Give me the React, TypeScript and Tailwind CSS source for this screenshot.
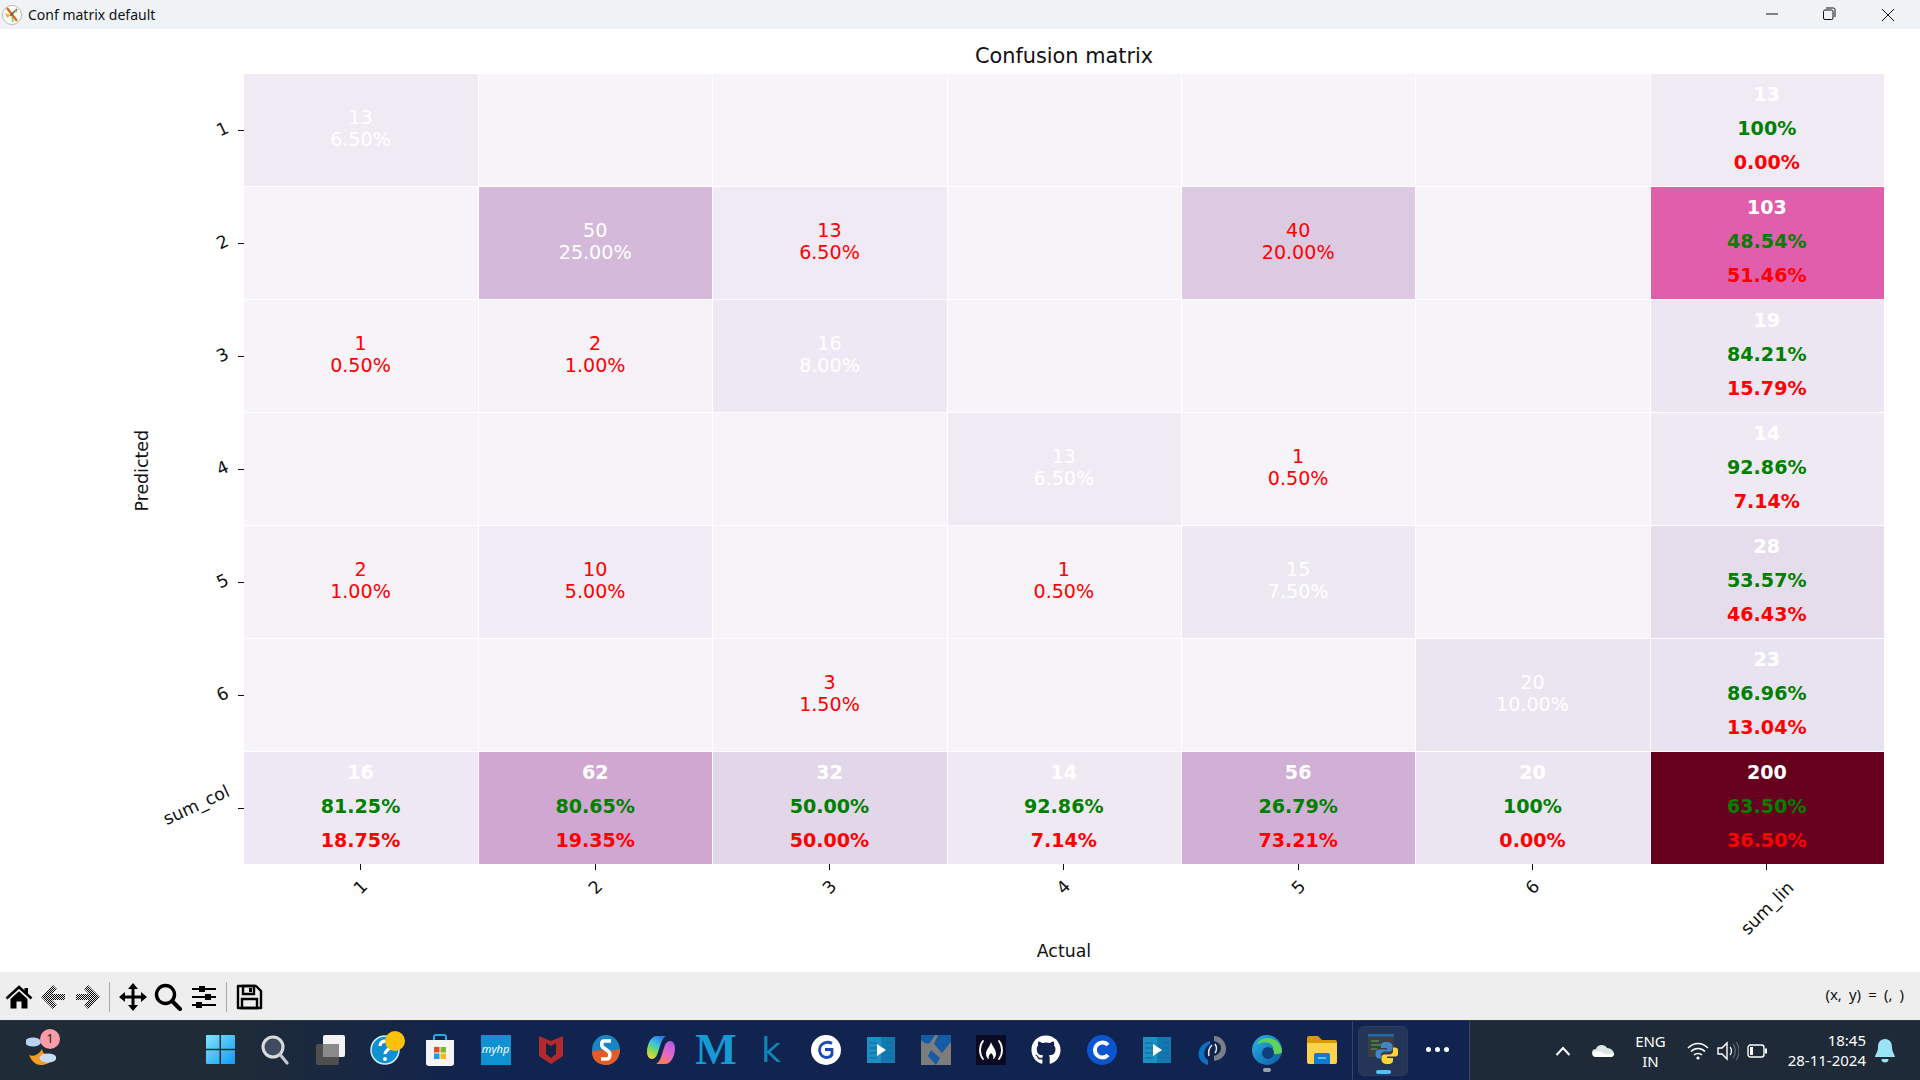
import { FaGithub } from "react-icons/fa";

const dejavu = "font-['DejaVu_Sans',sans-serif]";
const noto = "font-['Noto_Sans',sans-serif]";

// PuRd colormap, value out of 200
const cellBg: Record<number, string> = {
  0: "bg-[#f6f3f9]",
  1: "bg-[#f6f3f9]",
  2: "bg-[#f6f2f8]",
  3: "bg-[#f5f2f8]",
  10: "bg-[#f1ecf5]",
  13: "bg-[#efeaf4]",
  14: "bg-[#eee9f3]",
  15: "bg-[#ede9f3]",
  16: "bg-[#ede8f3]",
  19: "bg-[#ebe6f1]",
  20: "bg-[#eae5f1]",
  23: "bg-[#e8e3f0]",
  28: "bg-[#e5dcec]",
  32: "bg-[#e2d6e9]",
  40: "bg-[#dcc9e2]",
  50: "bg-[#d4b9da]",
  56: "bg-[#d1b0d5]",
  62: "bg-[#cfa7d1]",
  103: "bg-[#e05eab]",
  200: "bg-[#67001f]",
};

const matrix = [
  [13, 0, 0, 0, 0, 0],
  [0, 50, 13, 0, 40, 0],
  [1, 2, 16, 0, 0, 0],
  [0, 0, 0, 13, 1, 0],
  [2, 10, 0, 1, 15, 0],
  [0, 0, 3, 0, 0, 20],
];

const sumLin: [number, string, string][] = [
  [13, "100%", "0.00%"],
  [103, "48.54%", "51.46%"],
  [19, "84.21%", "15.79%"],
  [14, "92.86%", "7.14%"],
  [28, "53.57%", "46.43%"],
  [23, "86.96%", "13.04%"],
];

const sumCol: [number, string, string][] = [
  [16, "81.25%", "18.75%"],
  [62, "80.65%", "19.35%"],
  [32, "50.00%", "50.00%"],
  [14, "92.86%", "7.14%"],
  [56, "26.79%", "73.21%"],
  [20, "100%", "0.00%"],
  [200, "63.50%", "36.50%"],
];

const labels = ["1", "2", "3", "4", "5", "6"];

function Cell({ value, diagonal }: { value: number; diagonal: boolean }) {
  return (
    <div
      className={`flex flex-col items-center justify-center pb-[3px] pr-[1px] text-[19.1px] leading-[22px] ${cellBg[value]} ${diagonal ? "text-white" : "text-[#ff0000]"}`}
    >
      {value > 0 && <span>{value}</span>}
      {value > 0 && <span>{(value / 2).toFixed(2)}%</span>}
    </div>
  );
}

function SumCell({ row }: { row: [number, string, string] }) {
  return (
    <div
      className={`flex flex-col items-center justify-center pb-[3px] pr-[1px] text-[19.1px] font-bold leading-[34px] ${cellBg[row[0]]}`}
    >
      <span className="text-white">{row[0]}</span>
      <span className="text-[#008000]">{row[1]}</span>
      <span className="text-[#ff0000]">{row[2]}</span>
    </div>
  );
}

function AppIcon() {
  return (
    <svg width="20" height="20" viewBox="0 0 20 20" className="ml-[2px] mr-[6px]">
      <circle cx="10" cy="10" r="9.5" fill="#fff" stroke="#9a9a9a" strokeWidth="0.7" />
      <path d="M5 3l10 13" stroke="#e0661a" strokeWidth="2.4" />
      <path d="M15 4L8 11" stroke="#555" strokeWidth="1.4" />
      <path d="M3 8l6 2-4 3z" fill="#f5b52e" />
      <path d="M10 12l1 5" stroke="#7ccf5a" strokeWidth="1.6" />
      <circle cx="14" cy="6" r="1.3" fill="#8fbf3f" />
    </svg>
  );
}

function ToolIcon({ children }: { children: React.ReactNode }) {
  return (
    <svg width="28" height="28" viewBox="0 0 28 28" className="shrink-0">
      {children}
    </svg>
  );
}

function Toolbar() {
  return (
    <div className="flex h-[48px] items-center bg-[#eeeeee] pl-[4px] pr-[16px]">
      <div className="flex items-center gap-[7px] pt-[1px]">
        <div className="ml-[1px] mr-[-1px]">
          <ToolIcon>
            <path d="M1.500 15.500L14 4l12.500 11.500" fill="none" stroke="#000" strokeWidth="2.600" />
            <path d="M19.500 5h3.500v6.500l-3.500-3z" fill="#000" />
            <path d="M5.500 16L14 8.300 22.500 16v9.500H16.500V18.500h-5v7H5.500z" fill="#000" />
          </ToolIcon>
        </div>
        <ToolIcon>
          <defs>
            <pattern id="dither" width="2" height="2" patternUnits="userSpaceOnUse">
              <rect width="1" height="1" fill="#000" />
              <rect x="1" y="1" width="1" height="1" fill="#000" />
            </pattern>
          </defs>
          <path d="M2 14L14 2l4 4-5 5h13v6H13l5 5-4 4z" fill="url(#dither)" />
        </ToolIcon>
        <ToolIcon>
          <path d="M26 14L14 2l-4 4 5 5H2v6h13l-5 5 4 4z" fill="url(#dither)" />
        </ToolIcon>
        <div className="h-[30px] w-px bg-[#a8a8a8]" />
        <div className="ml-[2px]">
          <ToolIcon>
            <path
              d="M14 0l5 6h-3.500v6.500H22V9l6 5-6 5v-3.500h-6.500V22H19l-5 6-5-6h3.500v-6.500H6V19l-6-5 6-5v3.500h6.500V6H9z"
              fill="#000"
            />
          </ToolIcon>
        </div>
        <ToolIcon>
          <circle cx="11.500" cy="11.500" r="9" fill="none" stroke="#000" strokeWidth="3.400" />
          <path d="M18 18l8 8" stroke="#000" strokeWidth="4" strokeLinecap="round" />
        </ToolIcon>
        <div className="ml-[1px]">
          <ToolIcon>
            <path d="M2 6h24M2 14h24M2 22h24" stroke="#000" strokeWidth="2" />
            <path d="M9 3h6v6H9zM15 11h6v6h-6zM6 19h6v6H6z" fill="#000" />
          </ToolIcon>
        </div>
        <div className="ml-[1px] h-[30px] w-px bg-[#a8a8a8]" />
        <div className="ml-[1px]">
          <ToolIcon>
            <path
              d="M3 3h18l5 5v17H3z"
              fill="none"
              stroke="#000"
              strokeWidth="2.400"
              strokeLinejoin="round"
            />
            <path d="M8 3h11v8H8z" fill="none" stroke="#000" strokeWidth="2.400" />
            <path d="M7 16h15v9H7z" fill="none" stroke="#000" strokeWidth="2.400" />
            <path d="M14 5h3v4h-3z" fill="#000" />
          </ToolIcon>
        </div>
      </div>
      <span className={`ml-auto pb-[4px] text-[15px] text-[#111] [word-spacing:3.2px] ${noto}`}>
        (x, y) = (, )
      </span>
    </div>
  );
}

function PlayerIcon() {
  return (
    <svg width="28" height="26" viewBox="0 0 28 26">
      <rect width="28" height="26" fill="#1c8fc4" />
      <rect x="14" width="14" height="26" fill="#1478b0" />
      <path d="M2 6h8M2 11h8M2 16h8M2 21h8M19 6h7M19 11h7M19 16h7M19 21h7" stroke="#0f6a9e" strokeWidth="1.200" />
      <path d="M10 7l9 6-9 6z" fill="#fff" />
    </svg>
  );
}

function Start() {
  return (
    <svg width="29" height="29" viewBox="0 0 29 29">
      <defs>
        <linearGradient id="startG" x1="0" y1="0" x2="1" y2="1">
          <stop offset="0" stopColor="#7fe4fb" />
          <stop offset="1" stopColor="#119cf5" />
        </linearGradient>
      </defs>
      <path d="M0 1a1 1 0 011-1h12.500v13.800H0zM15 0h13a1 1 0 011 1v12.800H15zM0 15.200h13.500V29H1a1 1 0 01-1-1zM15 15.200h14V28a1 1 0 01-1 1H15z" fill="url(#startG)" />
    </svg>
  );
}

// one 55px slot for each pinned taskbar icon
const pinned: React.ReactNode[] = [
  <Start key="start" />,
  <svg key="search" width="30" height="30" viewBox="0 0 30 30">
    <circle cx="13" cy="12" r="10" fill="#3e4c5e" stroke="#d8dcdf" strokeWidth="3" />
    <path d="M20.500 20l6.500 8" stroke="#c4c8cc" strokeWidth="3.200" strokeLinecap="round" />
  </svg>,
  <svg key="tasks" width="30" height="30" viewBox="0 0 30 30">
    <rect x="1" y="9" width="23" height="21" rx="2" fill="#4f4f4f" />
    <rect x="8" y="0" width="22" height="22" rx="2" fill="#f3f3f3" />
    <rect x="8" y="9" width="16" height="13" fill="#8a8a8a" />
  </svg>,
  <div key="help" className="relative h-[30px] w-[30px]">
    <svg width="30" height="30" viewBox="0 0 30 30">
      <circle cx="15" cy="15" r="14" fill="#1190cf" stroke="#cfeefa" strokeWidth="1.500" />
      <path d="M10 11c0-7 11-6 10 0 0 4-5 4-5 8" fill="none" stroke="#fff" strokeWidth="3.200" />
      <circle cx="15" cy="24" r="2" fill="#fff" />
    </svg>
    <div className="absolute right-[-5px] top-[-4px] h-[20px] w-[20px] rounded-full bg-[#fdc208]" />
  </div>,
  <svg key="store" width="30" height="32" viewBox="0 0 30 32">
    <path d="M9 7V3a2 2 0 012-2h8a2 2 0 012 2v4" fill="none" stroke="#29a8e8" strokeWidth="2" />
    <path d="M1 6h28v23a3 3 0 01-3 3H4a3 3 0 01-3-3z" fill="#f5f5f5" />
    <rect x="9" y="13" width="5.500" height="5.500" fill="#e8492a" />
    <rect x="15.500" y="13" width="5.500" height="5.500" fill="#7cb72a" />
    <rect x="9" y="19.500" width="5.500" height="5.500" fill="#14a1e8" />
    <rect x="15.500" y="19.500" width="5.500" height="5.500" fill="#fdb813" />
  </svg>,
  <div key="myhp" className="flex h-[30px] w-[30px] items-center justify-center bg-[#0f92d2] text-[11px] italic text-white">
    <span className={noto}>myhp</span>
  </div>,
  <svg key="mcafee" width="26" height="30" viewBox="0 0 26 30">
    <path d="M1 1l12 5 12-5v20L13 29 1 21z" fill="#b32a2a" />
    <path d="M8 8l5 3 5-3v11l-5 4-5-4z" fill="#142247" />
  </svg>,
  <svg key="sync" width="28" height="30" viewBox="0 0 28 30">
    <ellipse cx="14" cy="15" rx="14" ry="15" fill="#1986c4" />
    <path d="M0 17c8-4 18 1 28-3 0 9-6 16-14 16S0 25 0 17z" fill="#e85a22" />
    <path d="M19 6h-7c-3 0-3 6 0 7l4 3c3 2 2 8-1 8H9" fill="none" stroke="#fff" strokeWidth="3.600" />
  </svg>,
  <svg key="copilot" width="30" height="30" viewBox="0 0 30 30">
    <defs>
      <linearGradient id="cpA" x1="0.7" y1="0" x2="0.2" y2="1">
        <stop offset="0" stopColor="#2a7af0" />
        <stop offset="0.4" stopColor="#3fc7d8" />
        <stop offset="0.7" stopColor="#8fd84a" />
        <stop offset="1" stopColor="#f7d23a" />
      </linearGradient>
      <linearGradient id="cpB" x1="0.7" y1="0" x2="0.2" y2="1">
        <stop offset="0" stopColor="#b45ce8" />
        <stop offset="0.5" stopColor="#e868c8" />
        <stop offset="1" stopColor="#f7823c" />
      </linearGradient>
    </defs>
    <path d="M11 1h9c-2 1-4 4-5 7l-3 9c-1 4-3 7-6 7-3 0-5-3-5-7C1 9 5 1 11 1z" fill="url(#cpA)" />
    <path d="M19 29h-9c2-1 4-4 5-7l3-9c1-4 3-7 6-7 3 0 5 3 5 7 0 8-4 16-10 16z" fill="url(#cpB)" />
  </svg>,
  <span key="m" className="font-['Liberation_Serif',serif] text-[44px] font-bold leading-none text-[#159ad6]">
    M
  </span>,
  <span key="k" className={`${dejavu} text-[34px] leading-none text-[#0e86b8]`}>
    k
  </span>,
  <svg key="g" width="30" height="30" viewBox="0 0 30 30">
    <circle cx="15" cy="15" r="15" fill="#fff" />
    <path d="M21 8.500A8.500 8.500 0 0 0 9 12c-1.500 5 1 10 6 10.500 2.500 0 5-1 6-3v-5h-7" fill="none" stroke="#1b49b8" strokeWidth="2.800" />
  </svg>,
  <PlayerIcon key="player" />,
  <svg key="tri" width="30" height="30" viewBox="0 0 30 30">
    <rect width="30" height="30" fill="#7d7d7d" />
    <path d="M3 0h11L9 8C7 10 3 8 0 5V0zM17 0h13v7L21 18l-8-9zM10 15l9 8-4 7-8-9z" fill="#155ba6" />
  </svg>,
  <div key="fcc" className={`flex h-[30px] w-[30px] items-center justify-center bg-[#0a0a23] text-[17px] text-white ${noto}`}>
    <svg width="26" height="22" viewBox="0 0 26 22">
      <path d="M5 2C1 7 1 15 5 20M21 2c4 5 4 13 0 18" fill="none" stroke="#fff" strokeWidth="1.800" strokeLinecap="round" />
      <path d="M13 3c1 4 5 7 5 12 0 3-2 5-3 5 1-2 0-4-2-6-2 2-3 4-2 6-1 0-3-2-3-5 0-5 4-7 5-12z" fill="#fff" />
    </svg>
  </div>,
  <FaGithub key="github" size={30} color="#fff" />,
  <svg key="c" width="30" height="30" viewBox="0 0 30 30">
    <circle cx="15" cy="15" r="15" fill="#0a56d0" />
    <path d="M21 10a7.500 7.500 0 1 0 0 10" fill="none" stroke="#fff" strokeWidth="4" />
  </svg>,
  <PlayerIcon key="player2" />,
  <svg key="arc" width="30" height="30" viewBox="0 0 30 30">
    <path d="M13 6C4 8 0 16 2 22c1 4 5 7 9 8v-5c-3-2-5-5-3-10 1-3 3-5 5-6z" fill="#0f6fc0" />
    <path d="M17 1c7 0 12 6 12 13 0 5-3 9-8 11l-4 1v-5c4-1 7-4 7-8s-3-6-7-7z" fill="#7a7f87" />
    <path d="M15 10c-3 3-4 7-3 11M18 9c2 3 2 6 0 9" fill="none" stroke="#eef" strokeWidth="1.500" />
  </svg>,
  <div key="edge" className="relative h-[30px] w-[30px]">
    <svg width="30" height="30" viewBox="0 0 30 30">
      <defs>
        <linearGradient id="edgeG" x1="0" y1="0" x2="1" y2="1">
          <stop offset="0" stopColor="#27b6e5" />
          <stop offset="1" stopColor="#0c59a4" />
        </linearGradient>
      </defs>
      <circle cx="15" cy="15" r="15" fill="url(#edgeG)" />
      <path d="M30 17c0-9-7-14-14-14C10 3 6 6 5 10c5-4 13-4 16 2 1 3-1 5-3 6 5 2 12 1 12-1z" fill="#5fd35a" />
      <circle cx="16" cy="18" r="6" fill="#0d3f7c" />
    </svg>
    <div className="absolute bottom-[-7px] left-[11px] h-[4px] w-[8px] rounded-full bg-[#9aa3b0]" />
  </div>,
  <svg key="folder" width="30" height="28" viewBox="0 0 30 28">
    <path d="M0 2a2 2 0 012-2h9l4 4h13a2 2 0 012 2v3H0z" fill="#d99a0a" />
    <path d="M0 7h30v19a2 2 0 01-2 2H2a2 2 0 01-2-2z" fill="#fcd24d" />
    <path d="M7 19a2 2 0 012-2h12a2 2 0 012 2v9H7z" fill="#0f7bd0" />
    <path d="M11 22h8" stroke="#7fd0f7" strokeWidth="1.500" />
  </svg>,
];

function Taskbar() {
  return (
    <div className="flex h-[60px] items-center border-t border-[#2b3446] bg-[linear-gradient(90deg,#1f2b36_0%,#1f2b36_12%,#11234f_25%,#11234f_100%)] text-white">
      <div className="relative ml-[26px] flex h-[30px] w-[30px] shrink-0 items-center justify-center">
        <svg width="30" height="30" viewBox="0 0 30 30">
          <path d="M3 19c4 2 10 0 13-6 1 6 5 6 12 8-3 6-8 8-13 8-6 0-10-5-12-10z" fill="#f59a23" />
          <ellipse cx="7" cy="6" rx="8" ry="4.500" fill="#b9d2f2" />
          <ellipse cx="22" cy="22" rx="8.500" ry="4.500" fill="#c9dcf5" />
        </svg>
        <div className={`absolute right-[-4px] top-[-7px] flex h-[20px] w-[20px] items-center justify-center rounded-full bg-[#fc9ba6] text-[13px] text-[#222] ${noto}`}>
          1
        </div>
      </div>
      <div className="ml-[136.5px] flex shrink-0">
        {pinned.map((icon, i) => (
          <div key={i} className="flex h-[59px] w-[55.1px] items-center justify-center pb-[2px]">
            {icon}
          </div>
        ))}
      </div>
      <div className="ml-[3px] h-[59px] w-px bg-[#394660]" />
      <div className="relative ml-[5px] flex h-[50px] w-[50px] items-center justify-center rounded-[6px] border border-[#2c3b61] bg-[#243558] pb-[3px]">
        <svg width="30" height="30" viewBox="0 0 30 30">
          <rect x="0" y="0" width="26" height="23" fill="#3c4046" />
          <rect x="0" y="0" width="26" height="2.500" fill="#1c6ab0" />
          <path d="M3 7h8M3 11h11M3 15h6" stroke="#4caf50" strokeWidth="1.200" />
          <path d="M18 8c-4 0-5 2-5 4v2h6v1.500h-8c-2.500 0-3.500 2-3.500 4.500s1 4.500 3.500 4.500h2V21c0-2 1.500-3.500 3.500-3.500h5c1.500 0 3-1.200 3-3V12c0-2-2-4-5-4z" fill="#3f86c6" />
          <path
            d="M18 8c-4 0-5 2-5 4v2h6v1.500h-8c-2.500 0-3.500 2-3.500 4.500s1 4.500 3.500 4.500h2V21c0-2 1.500-3.500 3.500-3.500h5c1.500 0 3-1.200 3-3V12c0-2-2-4-5-4z"
            fill="#ffd43b"
            transform="rotate(180 19 19)"
          />
        </svg>
        <div className="absolute bottom-[1px] h-[4px] w-[15px] rounded-full bg-[#4fc3f7]" />
      </div>
      <div className="flex w-[58px] items-center justify-center gap-[4px] pb-[2px]">
        <div className="h-[5px] w-[5px] rounded-full bg-white" />
        <div className="h-[5px] w-[5px] rounded-full bg-white" />
        <div className="h-[5px] w-[5px] rounded-full bg-white" />
      </div>
      <div className="ml-[3px] h-[59px] w-px bg-[#394660]" />
      <div className={`flex h-[59px] flex-1 items-center bg-[#1e2a37] ${noto}`}>
        <svg width="16" height="10" viewBox="0 0 16 10" className="ml-[85px]">
          <path d="M1.500 9L8 2l6.500 7" fill="none" stroke="#fff" strokeWidth="2" />
        </svg>
        <svg width="22" height="14" viewBox="0 0 22 14" className="ml-[21px]">
          <path d="M4 13a4 4 0 010-8c1-4 8-6 11-1 4 0 7 3 7 6 0 2-2 3-3 3z" fill="#dfe3e6" />
          <path d="M1 9c4-3 8-2 10 0 3 2 8 1 11 0v1c0 2-2 3-3 3H4c-2 0-3-2-3-4z" fill="#fff" />
        </svg>
        <div className="ml-[19px] flex w-[34px] flex-col items-center text-[15px] leading-[20px] text-white">
          <span>ENG</span>
          <span>IN</span>
        </div>
        <svg width="22" height="18" viewBox="0 0 22 18" className="ml-[20px]">
          <path d="M1 6c6-6 14-6 20 0M4 9.500c4-4 10-4 14 0M7 13c2-2 6-2 8 0" fill="none" stroke="#fff" strokeWidth="1.600" />
          <circle cx="11" cy="16" r="1.600" fill="#fff" />
        </svg>
        <svg width="22" height="20" viewBox="0 0 22 20" className="ml-[8px]">
          <path d="M1 7h4l5-5v16l-5-5H1z" fill="none" stroke="#fff" strokeWidth="1.400" />
          <path d="M13 6c2 2 2 6 0 8" fill="none" stroke="#fff" strokeWidth="1.300" />
          <path d="M16 3c3 4 3 10 0 14M19 1c4 5 4 13 0 18" fill="none" stroke="#777" strokeWidth="1" />
        </svg>
        <svg width="20" height="14" viewBox="0 0 20 14" className="ml-[8px]">
          <rect x="1" y="1" width="16" height="12" rx="2.500" fill="none" stroke="#fff" strokeWidth="1.400" />
          <rect x="3" y="3" width="3" height="8" fill="#fff" />
          <rect x="18" y="4.500" width="2" height="5" fill="#fff" />
        </svg>
        <div className="ml-auto flex flex-col items-end pb-[2px] text-[15px] leading-[20px] text-white">
          <span>18:45</span>
          <span>28-11-2024</span>
        </div>
        <svg width="20" height="24" viewBox="0 0 20 24" className="ml-[9px] mr-[25px]">
          <path d="M10 0c5 0 7 4 7 8 0 5 3 8 3 10H0c0-2 3-5 3-10 0-4 2-8 7-8z" fill="#9be3f5" />
          <path d="M6.500 20h7a3.500 3.500 0 01-7 0z" fill="#9be3f5" />
        </svg>
      </div>
    </div>
  );
}

export default function App() {
  return (
    <div className={`flex h-[1080px] w-[1920px] flex-col overflow-hidden bg-white text-[#111] ${dejavu}`}>
      {/* Title bar */}
      <div className="flex h-[29px] items-center bg-[#eff3f6]">
        <AppIcon />
        <span className={`text-[14px] text-[#111] ${noto}`}>Conf matrix default</span>
        <div className="ml-auto mr-[3px] flex">
          <div className="flex w-[58px] justify-center">
            <svg width="14" height="14" viewBox="0 0 14 14">
              <path d="M1 6h12" stroke="#111" strokeWidth="1" />
            </svg>
          </div>
          <div className="mt-[-1px] flex w-[58px] justify-center pr-[2px]">
            <svg width="14" height="14" viewBox="0 0 14 14">
              <rect x="1.500" y="3" width="9.500" height="9.500" rx="1.500" fill="none" stroke="#111" />
              <path d="M4 1h7.500A1.500 1.500 0 0113 2.500V10" fill="none" stroke="#111" />
            </svg>
          </div>
          <div className="flex w-[58px] justify-center">
            <svg width="14" height="14" viewBox="0 0 14 14">
              <path d="M1 1l12 12M13 1L1 13" stroke="#111" strokeWidth="1" />
            </svg>
          </div>
        </div>
      </div>

      {/* Plot */}
      <div className="flex h-[943px] flex-col">
        <div className="ml-[244px] flex h-[45px] w-[1640px] items-center justify-center pt-[10px] text-[20.83px]">
          Confusion matrix
        </div>
        <div className="flex h-[790px]">
          <div className="flex w-[155px] shrink-0 items-center justify-end pt-[4px]">
            <span className="rotate-180 text-[17.36px] [writing-mode:vertical-rl]">Predicted</span>
          </div>
          <div className="grid w-[89px] shrink-0 grid-rows-7 gap-px">
            {[...labels, "sum_col"].map((label) => (
              <div key={label} className="flex items-center justify-end">
                <span
                  className={`shrink-0 -rotate-[25deg] text-[17.36px] ${label === "sum_col" ? "mb-[6px] mr-[6px]" : "mb-[2px] mr-[10px]"}`}
                >
                  {label}
                </span>
                <div className="h-px w-[6px] shrink-0 bg-[#111]" />
              </div>
            ))}
          </div>
          <div className="grid w-[1640px] grid-cols-[234px_repeat(6,1fr)] grid-rows-7 gap-px bg-white">
            {matrix.map((row, r) => (
              <div key={r} className="contents">
                {row.map((value, c) => (
                  <Cell key={c} value={value} diagonal={r === c} />
                ))}
                <SumCell row={sumLin[r]} />
              </div>
            ))}
            {sumCol.map((row, c) => (
              <SumCell key={c} row={row} />
            ))}
          </div>
        </div>
        <div className="ml-[244px] grid h-[72px] w-[1640px] grid-cols-[234px_repeat(6,1fr)] gap-px">
          {[...labels, "sum_lin"].map((label) => (
            <div key={label} className="flex flex-col items-center pr-[1px]">
              <div className="h-[6px] w-px bg-[#111]" />
              <span
                className={`-rotate-45 text-[17.36px] ${label === "sum_lin" ? "mt-[25px]" : "mt-[4px]"}`}
              >
                {label}
              </span>
            </div>
          ))}
        </div>
        <div className="ml-[244px] flex h-[30px] w-[1640px] items-center justify-center text-[17.36px]">
          Actual
        </div>
      </div>

      <Toolbar />
      <Taskbar />
    </div>
  );
}
